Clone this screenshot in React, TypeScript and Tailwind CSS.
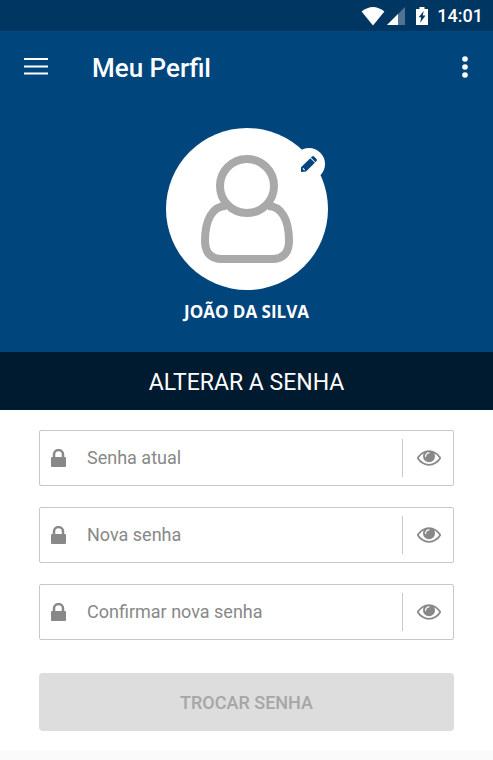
import { useState } from "react";

const fields = [
  { id: "current", label: "Senha atual" },
  { id: "next", label: "Nova senha" },
  { id: "confirm", label: "Confirmar nova senha" },
];

function StatusBar() {
  return (
    <div className="flex h-[31px] items-center justify-end bg-[#003662] pr-[10px] text-white">
      <svg className="h-[20px] w-[24px]" viewBox="0 0 24 20" fill="currentColor">
        <path d="M0.600 5.500Q12 -3.500 23.400 5.500L12 19.500Z" />
      </svg>
      <svg className="ml-[2px] h-[18px] w-[18px]" viewBox="0 0 18 18">
        <path d="M0 18L18 0V18Z" fill="#4f7391" />
        <path d="M0 18L11 7V18Z" fill="#fff" />
      </svg>
      <svg className="ml-[11px] h-[18px] w-[12px]" viewBox="0 0 12 18">
        <path d="M3.500 0H8.500V2H12V18H0V2H3.500Z" fill="#fff" />
        <path d="M7.800 4L2.600 10.300H5.200L4.200 15.700L9.500 8.500H6.700Z" fill="#003662" />
      </svg>
      <span className="ml-[9px] text-[18px] leading-[30px] font-medium">14:01</span>
    </div>
  );
}

function LockIcon() {
  return (
    <svg className="h-[18px] w-[15px] shrink-0" viewBox="0 0 15 18" aria-hidden="true">
      <path d="M3 9V5.600A4.500 4.500 0 0 1 12 5.600V9" fill="none" stroke="#888" strokeWidth="2.500" />
      <rect y="8" width="15" height="10" rx="1" fill="#888" />
    </svg>
  );
}

function EyeIcon() {
  return (
    <svg className="h-4 w-6" viewBox="0 384 1792 1152" fill="#888" aria-hidden="true">
      <path d="M1664 960q-152-236-381-353 61 104 61 225 0 185-131.500 316.500t-316.500 131.500-316.500-131.500-131.500-316.500q0-121 61-225-229 117-381 353 133 205 333.500 326.500t434.500 121.500 434.500-121.500 333.500-326.500zm-720-384q0-20-14-34t-34-14q-125 0-214.500 89.500t-89.500 214.500q0 20 14 34t34 14 34-14 14-34q0-86 61-147t147-61q20 0 34-14t14-34zm848 384q0 34-20 69-140 230-376.500 368.500t-499.500 138.500-499.500-139-376.500-368q-20-35-20-69t20-69q140-229 376.500-368t499.500-139 499.500 139 376.500 368q20 35 20 69z" />
    </svg>
  );
}

function PasswordField({ id, label }: { id: string; label: string }) {
  const [visible, setVisible] = useState(false);

  return (
    <div className="flex h-14 items-center rounded-[2px] border border-[#c8c8c8] bg-white pl-[11px]">
      <LockIcon />
      <input
        id={id}
        type={visible ? "text" : "password"}
        aria-label={label}
        placeholder={label}
        className="ml-[21px] h-full min-w-0 flex-1 pb-[2px] text-[18px] text-gray-800 outline-none placeholder:text-[#888]"
      />
      <button
        type="button"
        aria-label="Mostrar senha"
        onClick={() => setVisible(!visible)}
        className="flex h-[38px] w-[51px] items-center justify-center border-l border-[#c8c8c8] pl-[2px]"
      >
        <EyeIcon />
      </button>
    </div>
  );
}

export default function App() {
  return (
    <div className="min-h-screen bg-[#fafafa] font-['Roboto',sans-serif]">
      <StatusBar />

      <header className="bg-[#00457c] text-white">
        <div className="flex h-[72px] items-center pr-[25px] pl-6">
          <button type="button" aria-label="Menu">
            <svg className="h-[18px] w-6" viewBox="0 0 24 18" fill="currentColor">
              <rect width="24" height="2" y="0" />
              <rect width="24" height="2" y="7.500" />
              <rect width="24" height="2" y="14.500" />
            </svg>
          </button>
          <h1 className="ml-[44px] flex-1 pt-[2px] text-[26px] leading-8 font-medium">Meu Perfil</h1>
          <button type="button" aria-label="Mais opções">
            <svg className="h-[22px] w-[6px]" viewBox="0 0 6 22" fill="currentColor">
              <circle cx="3" cy="3" r="2.800" />
              <circle cx="3" cy="11" r="2.800" />
              <circle cx="3" cy="19" r="2.800" />
            </svg>
          </button>
        </div>

        <div className="flex flex-col items-center pt-[25px] pb-[28px]">
          <div className="relative h-[162px] w-[162px] rounded-full bg-white">
            <svg className="h-full w-full" viewBox="0 0 162 162" fill="none" stroke="#a9a9a9" strokeWidth="8">
              <circle cx="81" cy="58" r="27" />
              <path d="M60 78C47 78 39 91 39 113C39 125 45 131 56 131H106C117 131 123 125 123 113C123 91 115 78 102 78" />
            </svg>
            <button
              type="button"
              aria-label="Editar foto"
              className="absolute top-5 right-[3px] flex h-8 w-8 items-center justify-center rounded-full bg-white"
            >
              <svg className="h-4 w-4" viewBox="0 0 16 16" fill="#00457c">
                <path d="M9.300 2.200L13.900 6.800L5 15.600L0 16V11.300Z" />
                <path d="M9.900 1.600L11 0.500Q12 -0.300 13 0.500L15.500 3Q16.300 4 15.500 5L14.500 6.200Z" />
                <path d="M2 11.800L4 13.800L3.200 14.400L1.600 12.800Z" fill="#fff" />
              </svg>
            </button>
          </div>
          <p className="mt-[10px] font-['Open_Sans',sans-serif] text-[17px] leading-6 font-bold">JOÃO DA SILVA</p>
        </div>
      </header>

      <h2 className="bg-[#001a30] pt-1 text-center text-[23px] leading-[54px] text-white">ALTERAR A SENHA</h2>

      <form className="flex flex-col gap-[21px] bg-white px-[39px] pt-5 pb-[19px]">
        {fields.map((field) => (
          <PasswordField key={field.id} id={field.id} label={field.label} />
        ))}
        <button
          type="submit"
          disabled
          className="mt-3 h-[58px] rounded-[4px] bg-[#ddd] text-[18px] font-medium text-[#a6a6a6]"
        >
          TROCAR SENHA
        </button>
      </form>
    </div>
  );
}
